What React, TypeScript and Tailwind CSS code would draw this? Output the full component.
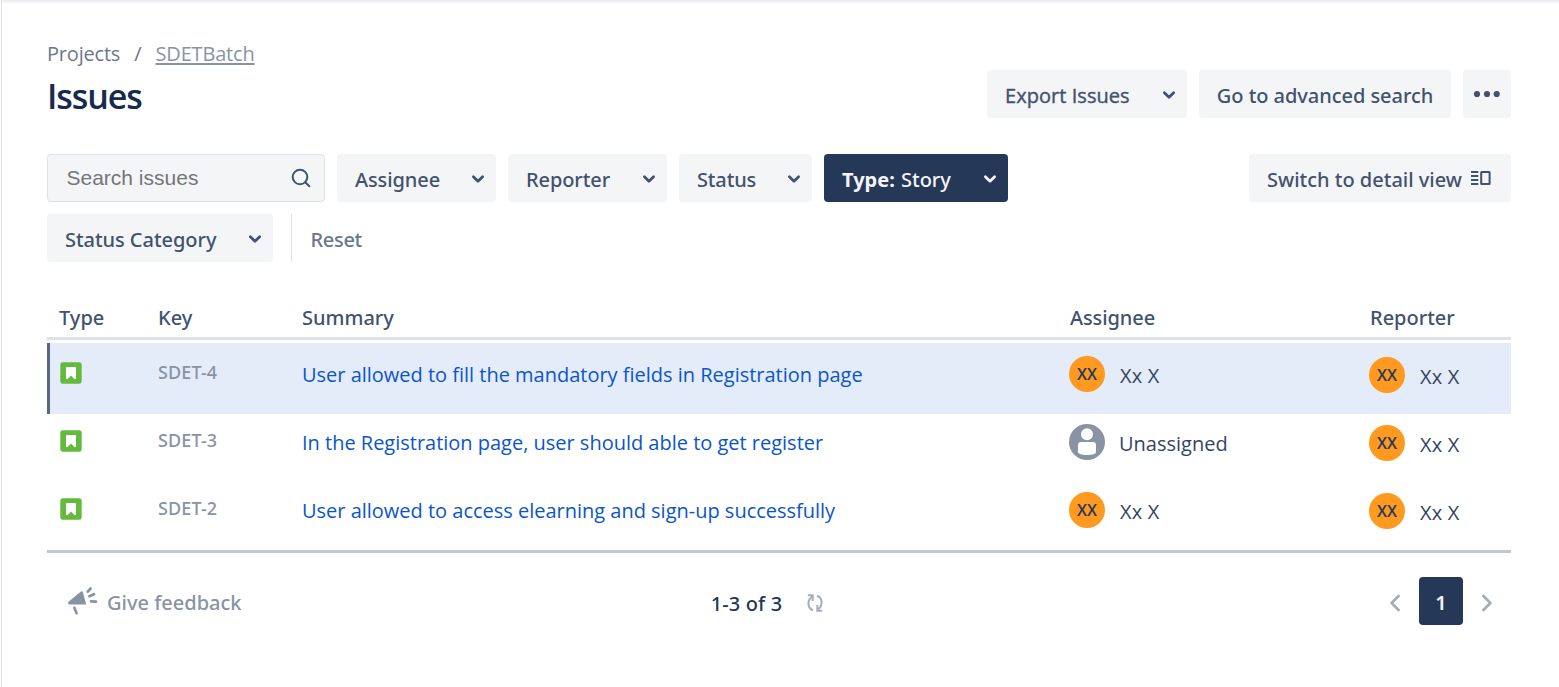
import type { ReactNode } from "react";

const OPEN = "font-['Open_Sans',sans-serif]";
const COLUMNS = "grid grid-cols-[99px_144px_768px_300px_1fr]";

function Chevron() {
  return (
    <svg className="h-6 w-6 shrink-0" viewBox="0 0 24 24" fill="none" stroke="currentColor" strokeWidth="2.8" strokeLinecap="round" strokeLinejoin="round">
      <path d="M7.4 10.8 12 15.2 16.6 10.8" />
    </svg>
  );
}

function DropButton({ children, size, dark, className = "" }: { children: ReactNode; size: string; dark?: boolean; className?: string }) {
  return (
    <button className={`flex h-12 items-center justify-between whitespace-nowrap rounded-[4px] pr-1.5 pl-[18px] ${size} ${dark ? "bg-[#253858] text-[#f4f5f7]" : "bg-[#f4f5f7] text-[#42526e]"} ${className}`}>
      <span className="pt-1">{children}</span>
      <Chevron />
    </button>
  );
}

function Breadcrumbs() {
  return (
    <nav className={`flex h-7 items-center ${OPEN} font-normal text-[#6b778c]`}>
      <span className="tracking-[-0.2px]">Projects</span>
      <span className="pl-3.5">/</span>
      <a className="ml-[14px] tracking-[-0.17px] text-[#8993a4] underline decoration-2 underline-offset-2">SDETBatch</a>
    </nav>
  );
}

function StoryIcon() {
  return (
    <svg className="h-[22px] w-[22px]" viewBox="0 0 22 22">
      <rect x="0.3" y="0.3" width="21.4" height="21.4" rx="2.6" fill="#63ba3c" />
      <path d="M7 5h8a1 1 0 0 1 1 1v10.9h-1.6L11 13.6 7.6 16.9H6V6a1 1 0 0 1 1-1z" fill="#fff" />
    </svg>
  );
}

function Person({ name }: { name?: string }) {
  return (
    <div className={`flex h-9 items-center ${OPEN} font-normal text-[#344563]`}>
      {name ? (
        <span className="flex h-9 w-9 items-center justify-center rounded-full bg-[#ff991f] text-base font-semibold text-[#253858]">XX</span>
      ) : (
        <svg className="h-9 w-9" viewBox="0 0 36 36">
          <circle cx="18" cy="18" r="18" fill="#8993a4" />
          <circle cx="18" cy="10.2" r="6" fill="#fff" />
          <path d="M9 21a3 3 0 0 1 3-3h12a3 3 0 0 1 3 3v7c0 2-4 3-9 3s-9-1-9-3z" fill="#fff" />
        </svg>
      )}
      <span className={name ? "pt-1 pl-[15px] tracking-[0.2px]" : "pt-1 pl-3.5"}>{name ?? "Unassigned"}</span>
    </div>
  );
}

const ISSUES = [
  { key: "SDET-4", summary: "User allowed to fill the mandatory fields in Registration page", assignee: "Xx X", reporter: "Xx X", selected: true },
  { key: "SDET-3", summary: "In the Registration page, user should able to get register", assignee: undefined, reporter: "Xx X", selected: false },
  { key: "SDET-2", summary: "User allowed to access elearning and sign-up successfully", assignee: "Xx X", reporter: "Xx X", selected: false },
];

function IssueTable() {
  return (
    <section className="mt-[41px] border-b-[3px] border-[#c1c7d0]">
      <div className={`${COLUMNS} h-[37px] border-b-[3px] border-[#dfe1e6] pt-px pl-3 leading-7 text-[#42526e]`}>
        <span>Type</span>
        <span>Key</span>
        <span>Summary</span>
        <span className="tracking-[-0.1px]">Assignee</span>
        <span>Reporter</span>
      </div>
      <div className="pt-[3px]">
        {ISSUES.map((issue) => (
          <div
            key={issue.key}
            className={`${COLUMNS} items-start border-l-[3px] pl-[9px] ${issue.selected ? "h-[71px] border-[#596780] bg-[#e4ecfa] pt-[3px]" : "h-[68px] border-transparent"}`}
          >
            <span className="pt-4 pl-px"><StoryIcon /></span>
            <span className="pt-3 text-lg leading-7 tracking-[0.1px] text-[#8993a4]">{issue.key}</span>
            <a className={`pt-[15px] leading-7 tracking-[-0.01px] ${OPEN} font-normal text-[#0b55cc]`}>{issue.summary}</a>
            <span className="-ml-px pt-2.5"><Person name={issue.assignee} /></span>
            <span className="-ml-px pt-[11px]"><Person name={issue.reporter} /></span>
          </div>
        ))}
      </div>
    </section>
  );
}

function Footer() {
  return (
    <footer className="mt-6 grid h-12 grid-cols-3 items-center">
      <div className="flex items-center pl-5 text-[#8993a4]">
        <svg className="h-[30px] w-[31px]" viewBox="0 0 31 30" fill="none" stroke="currentColor" strokeWidth="2.7" strokeLinecap="round">
          <path d="M1.8 15.6 14 5.6Q15.4 4.8 15.9 6.2L19.2 18.6H2.4Q0 17.6 1.8 15.6z" fill="currentColor" stroke="none" />
          <path d="M7.4 21.8 9.6 27.2M20.8 5.7 23.6 2.5M22.4 10.2 27 8.2M24 15.3 29 15.7" />
        </svg>
        <span className="pt-1 pl-[9px]">Give feedback</span>
      </div>
      <div className="flex items-center justify-center pr-6 text-[#253858]">
        <span className="pt-1.5 tracking-[0.15px]">1-3 of 3</span>
        <svg className="mt-[3px] ml-[25px] h-[18px] w-4 text-[#a5adba]" viewBox="0 0 16 18" fill="none" stroke="currentColor" strokeWidth="2">
          <path d="M6 16.2C.4 14.6-.1 6.3 5 2.6M10 1.8c5.6 1.6 6.1 9.9 1 13.6" />
          <path d="M.8 1.3H5.7V7M15.2 16.7H10.3V11" />
        </svg>
      </div>
      <div className="flex items-center justify-end text-[#a5adba]">
        <svg className="mt-[3px] h-[18px] w-3" viewBox="0 0 12 18" fill="none" stroke="currentColor" strokeWidth="2.7" strokeLinecap="round" strokeLinejoin="round">
          <path d="M9.6 2 2.6 9 9.6 16" />
        </svg>
        <button className="mx-[18px] flex h-12 w-11 items-center justify-center rounded-[4px] bg-[#253858] pt-[3px] font-semibold text-[#f4f5f7]">1</button>
        <svg className="mt-[3px] mr-[18px] h-[18px] w-3" viewBox="0 0 12 18" fill="none" stroke="currentColor" strokeWidth="2.7" strokeLinecap="round" strokeLinejoin="round">
          <path d="M2.4 2 9.4 9 2.4 16" />
        </svg>
      </div>
    </footer>
  );
}

export default function App() {
  return (
    <main className="h-[687px] w-[1559px] overflow-hidden bg-white pl-px font-['Noto_Sans',sans-serif] text-[20px] leading-7 font-medium">
      <div className="h-full border-l border-[#dfe1e6]">
        <div className="h-1 bg-linear-to-b from-[#e9e9f1] to-white" />
        <div className="pt-[35px] pr-12 pl-[45px]">
          <header className="flex items-end justify-between">
            <div className="pt-px pb-0.5">
              <Breadcrumbs />
              <h1 className={`mt-2 ${OPEN} text-[34px] leading-10 font-semibold tracking-[-1.1px] text-[#172b4d]`}>Issues</h1>
            </div>
            <div className="flex gap-3 text-[#42526e]">
              <DropButton size="w-[200px]" className={`${OPEN} font-normal tracking-[0.05px] [-webkit-text-stroke:0.4px_currentColor]`}>Export Issues</DropButton>
              <button className="h-12 w-[252px] rounded-[4px] bg-[#f4f5f7] pt-[3px] tracking-[-0.05px] whitespace-nowrap">Go to advanced search</button>
              <button className="flex h-12 w-12 items-center justify-center rounded-[4px] bg-[#f4f5f7]">
                <svg className="h-6 w-[30px]" viewBox="0 0 30 24" fill="currentColor">
                  <circle cx="5" cy="12" r="3.1" />
                  <circle cx="15" cy="12" r="3.1" />
                  <circle cx="24.7" cy="12" r="3.1" />
                </svg>
              </button>
            </div>
          </header>

          <div className="mt-9 flex items-start justify-between">
            <div className="flex w-[1000px] flex-wrap gap-3">
              <div className="flex h-12 w-[278px] items-center justify-between rounded-[4px] border border-[#dfe1e6] bg-[#f4f5f7] pr-[11px] pl-[18.5px]">
                <span className="font-['Liberation_Sans',sans-serif] text-[21px] font-normal text-[#757575]">Search issues</span>
                <svg className="h-6 w-6 text-[#42526e]" viewBox="0 0 24 24" fill="none" stroke="currentColor" strokeWidth="2" strokeLinecap="round">
                  <circle cx="11" cy="11" r="7.3" />
                  <path d="m16.5 16.5 3.8 3.8" />
                </svg>
              </div>
              <DropButton size="w-[159px]" className="tracking-[-0.1px]">Assignee</DropButton>
              <DropButton size="w-[159px]" className="tracking-[-0.1px]">Reporter</DropButton>
              <DropButton size="w-[133px]" className="tracking-[-0.15px]">Status</DropButton>
              <DropButton size="w-[184px]" dark><b className="font-bold">Type:</b> <span className="pl-px">Story</span></DropButton>
              <div className="flex w-full items-center">
                <DropButton size="w-[226px]" className="tracking-[-0.05px]">Status Category</DropButton>
                <div className="ml-[18px] flex h-12 items-center border-l border-[#dfe1e6] pt-1 pl-[18.5px] tracking-[-0.3px] text-[#6b778c]">Reset</div>
              </div>
            </div>
            <button className="flex h-12 w-[262px] items-center rounded-[4px] bg-[#f4f5f7] pl-[18px] text-[#42526e]">
              <span className="pt-1 whitespace-nowrap">Switch to detail view</span>
              <svg className="ml-2 h-4 w-[22px]" viewBox="0 0 22 16" fill="none" stroke="currentColor" strokeWidth="2">
                <path d="M1 2h7.3M1 6h7.3M1 10h7.3M1 14h7.3" />
                <rect x="11.2" y="2" width="8.4" height="12" rx="0.5" />
              </svg>
            </button>
          </div>

          <IssueTable />
          <Footer />
        </div>
      </div>
    </main>
  );
}
